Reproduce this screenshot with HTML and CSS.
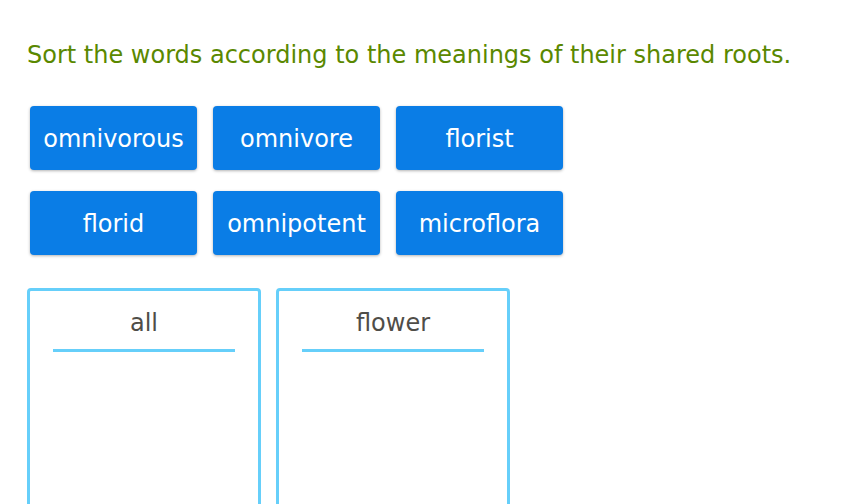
FILE: index.html
```html
<!DOCTYPE html>
<html lang="en">

<head>
    <meta charset="UTF-8">
    <meta name="viewport" content="width=device-width, initial-scale=1.0">
    <title>Sort the Words</title>
    <link rel="stylesheet" href="styles.css">
</head>

<body>
    <div class="question">
        <p class="prompt">Sort the words according to the meanings of their shared roots.</p>

        <div class="tiles">
            <div class="tile">omnivorous</div>
            <div class="tile">omnivore</div>
            <div class="tile">florist</div>
            <div class="tile">florid</div>
            <div class="tile">omnipotent</div>
            <div class="tile">microflora</div>
        </div>

        <div class="bins">
            <div class="bin">
                <div class="bin-title">all</div>
                <div class="bin-rule"></div>
            </div>
            <div class="bin">
                <div class="bin-title">flower</div>
                <div class="bin-rule"></div>
            </div>
        </div>
    </div>
</body>

</html>
```

FILE: styles.css
```css
body {
    margin: 0;
    padding: 0;
    font-family: 'DejaVu Sans', Verdana, sans-serif;
    background: #ffffff;
    overflow: hidden;
}

.question {
    padding: 0 27px;
}

.prompt {
    margin: 0;
    padding-top: 42px;
    font-size: 24px;
    line-height: 26px;
    color: #5a8800;
}

.tiles {
    display: grid;
    grid-template-columns: repeat(3, 167px);
    column-gap: 16px;
    row-gap: 21px;
    margin: 38px 0 0 3px;
}

.tile {
    height: 64px;
    padding-top: 2px;
    box-sizing: border-box;
    display: flex;
    align-items: center;
    justify-content: center;
    background: #0a7de6;
    color: #ffffff;
    font-size: 24px;
    border-radius: 4px;
    box-shadow: 0 1px 3px rgba(0, 0, 0, 0.3);
}

.bins {
    display: flex;
    gap: 15px;
    margin-top: 33px;
}

.bin {
    width: 228px;
    height: 300px;
    border: 3px solid #66cffa;
    border-radius: 4px;
}

.bin-title {
    text-align: center;
    font-size: 24px;
    line-height: 26px;
    color: #4f4d48;
    margin-top: 19px;
}

.bin-rule {
    width: 80%;
    height: 3px;
    margin: 13px auto 0;
    background: #66cffa;
}
```
